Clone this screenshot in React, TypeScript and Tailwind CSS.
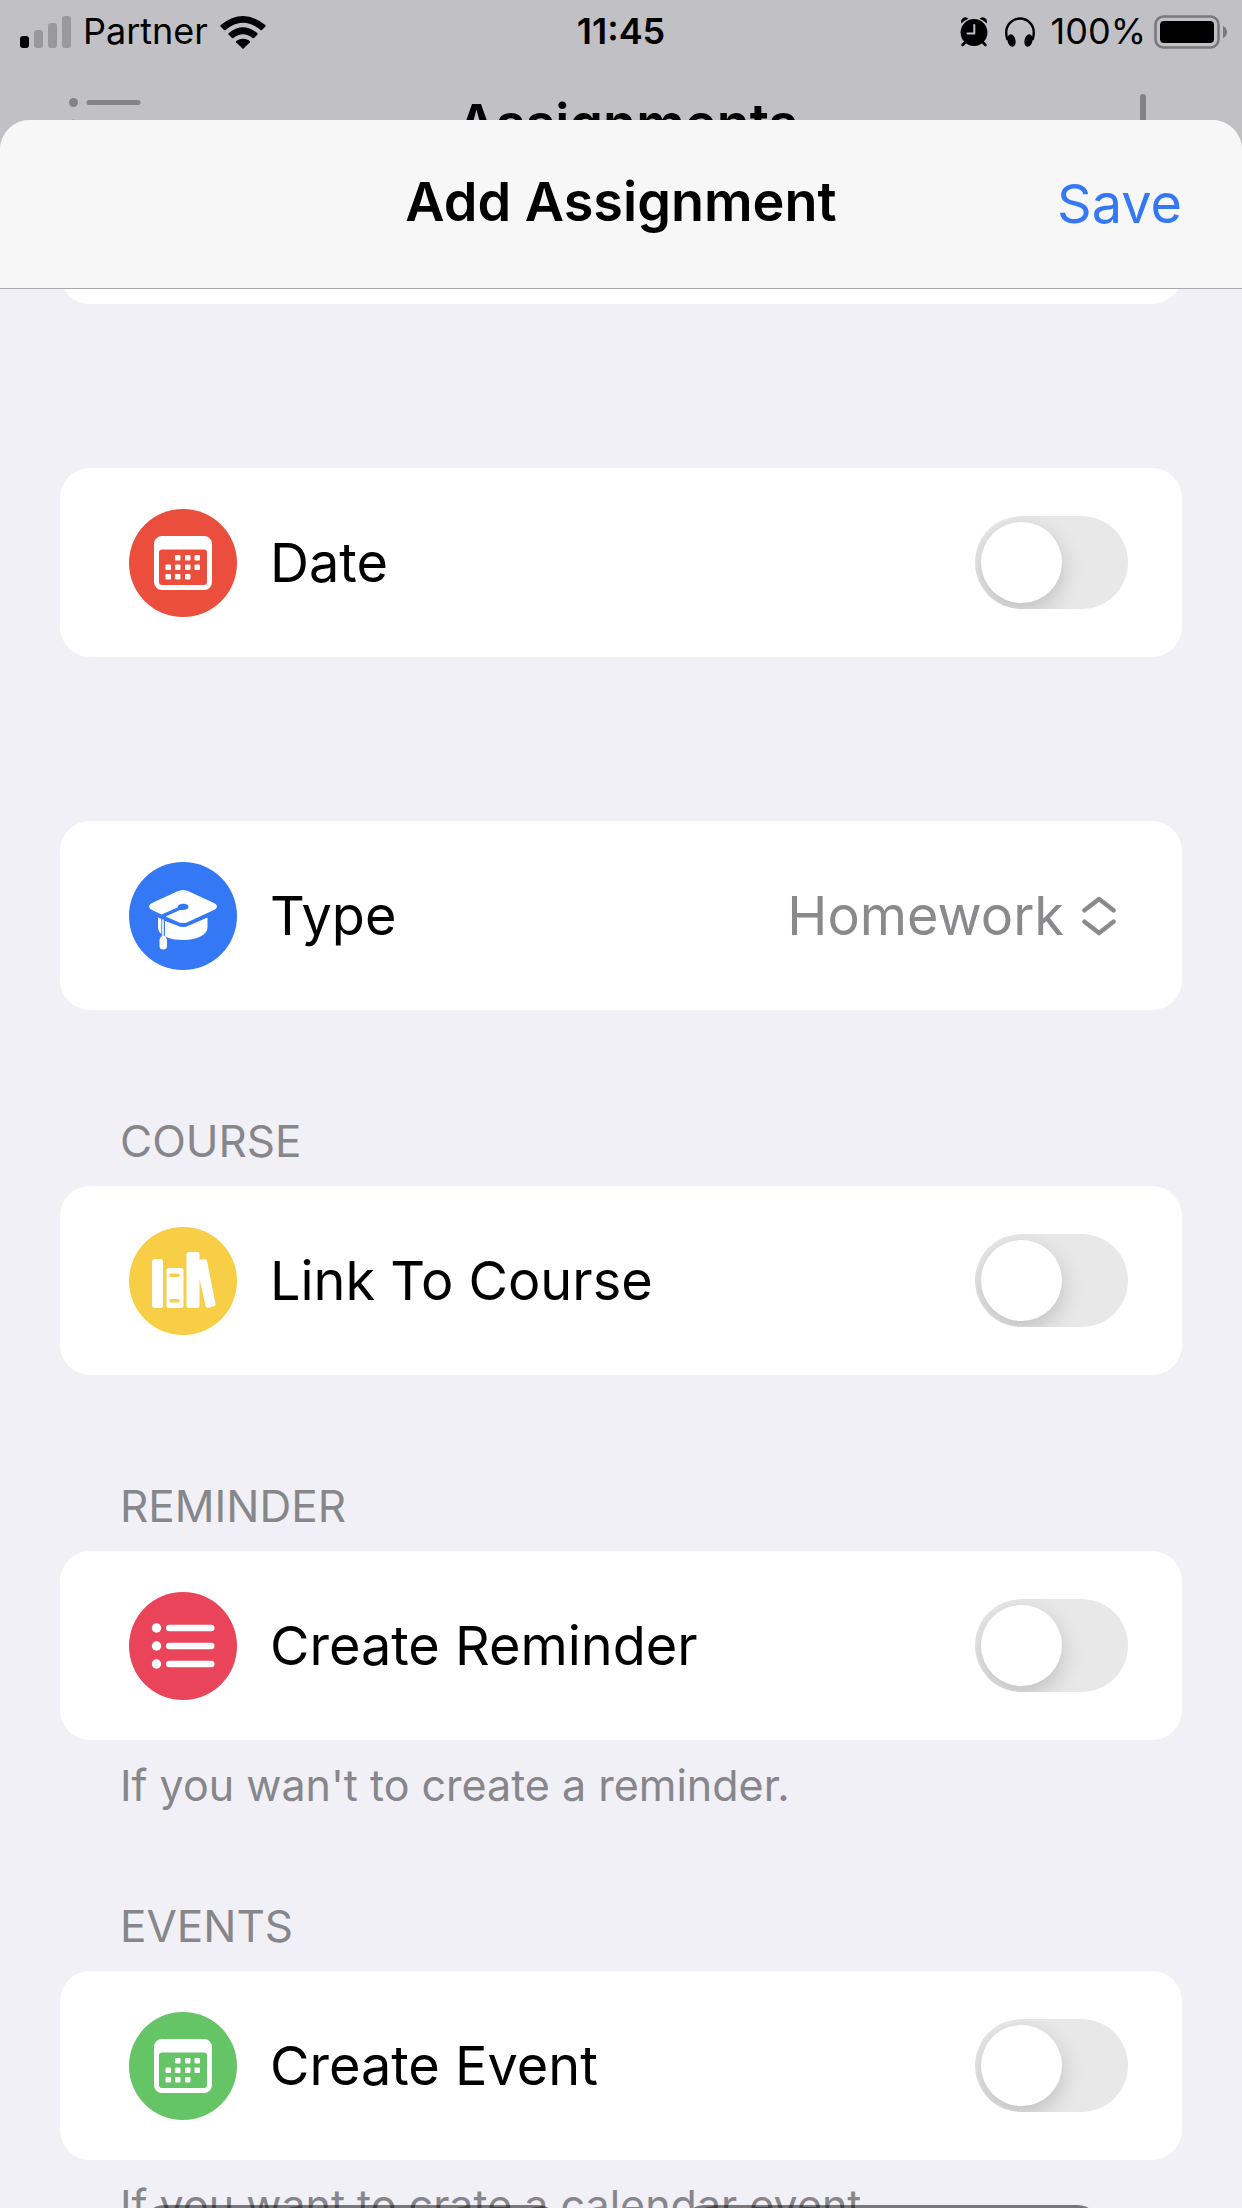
import type { ReactNode } from "react";

const Calendar = () => (
  <svg viewBox="0 0 108 108" className="size-full" aria-hidden="true">
    <path fill="#fff" fillRule="evenodd" d="M33 27h42a8 8 0 0 1 8 8v38a8 8 0 0 1-8 8H33a8 8 0 0 1-8-8V35a8 8 0 0 1 8-8Zm0 13.500a3 3 0 0 0-3 3V73a3 3 0 0 0 3 3h42a3 3 0 0 0 3-3V43.500a3 3 0 0 0-3-3Z" />
    <g fill="#fff">
      {[[46, 46], [56, 46], [65.500, 46], [36.500, 55.500], [46, 55.500], [56, 55.500], [65.500, 55.500], [36.500, 65], [46, 65], [56, 65]].map(([x, y]) => (
        <rect key={`${x}-${y}`} x={x} y={y} width="5.500" height="5.500" rx="1" />
      ))}
    </g>
  </svg>
);

const Cap = () => (
  <svg viewBox="0 0 108 108" className="size-full" aria-hidden="true">
    <path fill="#fff" d="M48 29.500Q54 26.500 60 29.500L86 41.500Q90 44.500 86 47.500L60 59.500Q54 62.500 48 59.500L36.500 54.500L51 48C56 48.500 59.500 47 59.500 45C59.500 43 57 41.800 54 41.800C51 41.800 49 43 48.500 45.500L32.500 52.500L22 47.500Q18 44.500 22 41.500Z" />
    <path fill="#fff" d="M36 59L48 63.500Q54 66.500 60 63.500L78.500 55.500V65C78.500 73 68 78 54 78C47 78 40.500 77 36 74.500Z" />
    <path fill="#fff" d="M29 55.500L32.300 57V72C30 70 29 67.500 29 65ZM33.200 57.500H34.800V73.500C37 74.500 38 76.500 38 79V84Q38 87.500 34.500 87.500Q30.500 87.500 30.500 84V79C30.500 76.500 31.500 75 33.200 74Z" />
  </svg>
);

const Books = () => (
  <svg viewBox="0 0 108 108" className="size-full" aria-hidden="true">
    <g fill="#fff">
      <rect x="23" y="32" width="11" height="49" rx="2.500" />
      <path fillRule="evenodd" d="M40 41h12a2.500 2.500 0 0 1 2.500 2.500v35a2.500 2.500 0 0 1-2.500 2.500H40a2.500 2.500 0 0 1-2.500-2.500v-35A2.500 2.500 0 0 1 40 41Zm2 5.500a1.500 1.500 0 0 0 0 3.500h7a1.500 1.500 0 0 0 0-3.500Zm0 25.500a1.500 1.500 0 0 0 0 3.500h7a1.500 1.500 0 0 0 0-3.500Z" />
      <path d="M60 25h8a2.500 2.500 0 0 1 2.500 2.500v5.500l5-1q2-.3 2.500 1.700l8.500 43q.4 2-1.600 2.500l-5.500 1.500q-2.400.500-2.900-2L70.500 52v26.500a2.500 2.500 0 0 1-2.500 2.500h-8a2.500 2.500 0 0 1-2.500-2.500v-51A2.500 2.500 0 0 1 60 25Z" />
    </g>
  </svg>
);

const List = () => (
  <svg viewBox="0 0 108 108" className="size-full" aria-hidden="true">
    <g fill="#fff">
      {[36, 54, 72].map((y) => (
        <g key={y}>
          <circle cx="27.500" cy={y} r="4.700" />
          <rect x="37" y={y - 3.300} width="48.500" height="6.600" rx="3.300" />
        </g>
      ))}
    </g>
  </svg>
);

const Badge = ({ color, children }: { color: string; children: ReactNode }) => (
  <span className={`size-[108px] shrink-0 rounded-full ${color}`}>{children}</span>
);

const cardClass = "flex h-[189px] items-center gap-[33px] rounded-[30px] bg-white pl-[69px]";

function ToggleCard({ id, label, color, icon }: { id: string; label: string; color: string; icon: ReactNode }) {
  return (
    <div className={`${cardClass} pr-[54px]`}>
      <Badge color={color}>{icon}</Badge>
      <label htmlFor={id} className="flex-1 text-[54px] leading-[68px]">{label}</label>
      <input
        id={id}
        type="checkbox"
        role="switch"
        className="h-[93px] w-[153px] shrink-0 appearance-none overflow-hidden rounded-full bg-[#e8e8e8] p-[6px] before:block before:size-[81px] before:rounded-full before:bg-white before:shadow-[0_8px_22px_rgba(0,0,0,0.18)] before:transition-transform checked:bg-[#65c466] checked:before:translate-x-[60px]"
      />
    </div>
  );
}

const Heading = ({ children }: { children: ReactNode }) => (
  <h2 className="px-[60px] pb-[18px] text-[44px] leading-[54px] text-[#87868b]">{children}</h2>
);

const Footnote = ({ children }: { children: ReactNode }) => (
  <p className="whitespace-nowrap px-[60px] pt-[18px] text-[43px] leading-[54px] text-[#87868b]">{children}</p>
);

function StatusBar() {
  return (
    <div className="grid h-16 shrink-0 grid-cols-[1fr_auto_1fr] items-center px-5 text-[36px] leading-[42px]">
      <div className="flex items-center gap-3">
        <svg viewBox="0 0 51 32" className="h-8 w-[51px]" aria-hidden="true">
          <rect y="20" width="9" height="12" rx="3" />
          <g fill="#99999b">
            <rect x="14" y="14" width="9" height="18" rx="3" />
            <rect x="28" y="7" width="9" height="25" rx="3" />
            <rect x="42" width="9" height="32" rx="3" />
          </g>
        </svg>
        <span className="pb-0.5">Partner</span>
        <svg viewBox="0 0 46 33" className="h-[33px] w-[46px]" aria-hidden="true">
          <path d="M23 33L16 26.300Q15.500 25.600 16.200 25Q23 20.500 29.800 25Q30.500 25.600 30 26.300Z" />
          <path d="M8.500 18.500L12 22Q12.600 22.500 13.400 22Q23 14.500 32.600 22Q33.400 22.500 34 22L37.500 18.500Q38 17.800 37.300 17.200Q23 5.500 8.700 17.200Q8 17.800 8.500 18.500Z" />
          <path d="M.6 10.500L4 14Q4.700 14.500 5.500 14Q23-.5 40.500 14Q41.300 14.500 42 14L45.400 10.500Q46 9.800 45.300 9.100Q23-9 .7 9.100Q0 9.800.6 10.500Z" />
        </svg>
      </div>
      <span className="pb-0.5 font-semibold">11:45</span>
      <div className="flex items-center justify-end">
        <svg viewBox="0 0 28 30" className="mr-[17px] h-[30px] w-7" aria-hidden="true">
          <circle cx="14" cy="15.500" r="13.400" />
          <path d="M1.500 6.500Q0 3 3 1Q6 -1 8.500 1.800Q4 3.500 1.500 6.500ZM26.500 6.500Q28 3 25 1Q22 -1 19.500 1.800Q24 3.500 26.500 6.500Z" />
          <path d="M5 25.500L2.500 28M23 25.500L25.500 28" stroke="#000" strokeWidth="2.600" strokeLinecap="round" />
          <path d="M14.300 8V16.500H7.500" fill="none" stroke="#c1c0c5" strokeWidth="2" strokeLinecap="round" strokeLinejoin="round" />
        </svg>
        <svg viewBox="0 0 30 30" className="mr-4 h-[30px] w-[30px]" aria-hidden="true">
          <path d="M2.500 23Q1.200 19 1.200 15.500A13.800 14 0 0 1 28.800 15.500Q28.800 19 27.500 23" fill="none" stroke="#000" strokeWidth="2.400" />
          <ellipse cx="6.500" cy="23.500" rx="4" ry="6.300" transform="rotate(-14 6.500 23.500)" />
          <ellipse cx="23.500" cy="23.500" rx="4" ry="6.300" transform="rotate(14 23.500 23.500)" />
        </svg>
        <span className="mr-2 pb-0.5">100%</span>
        <svg viewBox="0 0 74 34" className="-mr-1.5 h-[34px] w-[74px]" aria-hidden="true">
          <rect x="1.500" y="1.500" width="63" height="31" rx="8" fill="none" stroke="#79787b" strokeWidth="2.600" />
          <rect x="6" y="6" width="54" height="22" rx="4" />
          <path d="M69 11Q73 13 73 17T69 23Z" fill="#79787b" />
        </svg>
      </div>
    </div>
  );
}

export default function App() {
  return (
    <main className="relative flex h-screen flex-col overflow-hidden bg-[#c1c0c5] font-['Inter','Liberation_Sans',sans-serif] text-black">
      <StatusBar />
      <div className="flex h-14 shrink-0 items-start justify-between overflow-hidden pl-[68px] pr-[69px]" aria-hidden="true">
        <svg viewBox="0 0 74 58" className="mt-[33px] h-[58px] w-[74px] shrink-0" fill="#838285">
          <circle cx="5.500" cy="5.500" r="4.500" />
          <rect x="18.500" y="3" width="54" height="5" rx="2.500" />
          <circle cx="5.500" cy="27" r="4.500" />
          <rect x="18.500" y="24.500" width="54" height="5" rx="2.500" />
        </svg>
        <span className="mt-[26px] text-[54px] font-semibold leading-[68px]">Assignments</span>
        <svg viewBox="0 0 60 60" className="mt-[30px] size-[60px] shrink-0" fill="#838285">
          <rect x="27" width="6" height="60" rx="3" />
          <rect y="27" width="60" height="6" rx="3" />
        </svg>
      </div>

      <section className="flex min-h-0 flex-1 flex-col overflow-hidden rounded-t-[30px] bg-[#f1f0f6]" aria-labelledby="sheet-title">
        <header className="grid h-[169px] shrink-0 grid-cols-[1fr_auto_1fr] items-center border-b border-[#aaa9ae] bg-[#f7f7f7] px-[60px]">
          <span />
          <h1 id="sheet-title" className="pb-1 text-[54px] font-semibold leading-[68px]">Add Assignment</h1>
          <button type="button" className="justify-self-end text-[54px] leading-[68px] text-[#3478f6]">Save</button>
        </header>

        <form className="min-h-0 flex-1 overflow-hidden px-[60px]">
          <div className="-mt-[49px] h-16 rounded-[30px] bg-white" />
          <div className="mt-[164px]">
            <ToggleCard id="date" label="Date" color="bg-[#eb4e3d]" icon={<Calendar />} />
          </div>
          <div className={`${cardClass} mt-[164px] pr-[66px]`}>
            <Badge color="bg-[#3478f6]"><Cap /></Badge>
            <label htmlFor="type" className="flex-1 text-[54px] leading-[68px]">Type</label>
            <div className="flex items-center gap-[18px] text-[#8a8a8d]">
              <select id="type" className="field-sizing-content appearance-none bg-transparent text-[54px] leading-[68px]">
                <option>Homework</option>
                <option>Exam</option>
              </select>
              <svg viewBox="0 0 34 40" className="h-10 w-[34px]" fill="none" stroke="currentColor" strokeWidth="4.500" strokeLinecap="round" strokeLinejoin="round" aria-hidden="true">
                <path d="M2.500 14.300L17 3L31.500 14.300M2.500 25.700L17 37L31.500 25.700" />
              </svg>
            </div>
          </div>
          <div className="mt-[104px]">
            <Heading>COURSE</Heading>
            <ToggleCard id="course" label="Link To Course" color="bg-[#f7ce46]" icon={<Books />} />
          </div>
          <div className="mt-[104px]">
            <Heading>REMINDER</Heading>
            <ToggleCard id="reminder" label="Create Reminder" color="bg-[#ea445a]" icon={<List />} />
            <Footnote>If you wan't to create a reminder.</Footnote>
          </div>
          <div className="mt-[87px]">
            <Heading>EVENTS</Heading>
            <ToggleCard id="event" label="Create Event" color="bg-[#65c466]" icon={<Calendar />} />
            <Footnote>If you want to crate a calendar event.</Footnote>
          </div>
        </form>
      </section>

      <div className="absolute inset-x-[144px] bottom-0 flex h-[3px] justify-between overflow-hidden" aria-hidden="true">
        <span className="h-10 w-[414px] rounded-[40px] bg-black/50" />
        <span className="h-10 w-[414px] rounded-[40px] bg-black/50" />
      </div>
    </main>
  );
}
